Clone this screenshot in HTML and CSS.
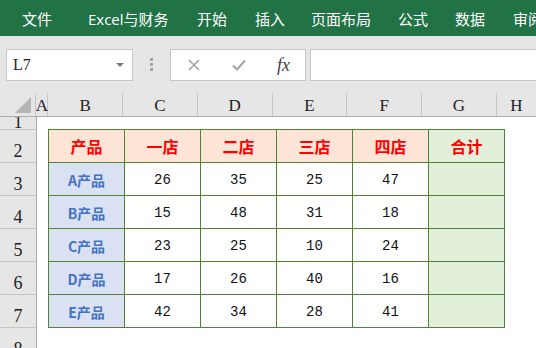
FILE: index.html
```html
<html>
<head>
    <link rel="stylesheet" href="styles.css">
    <title>Excel</title>
</head>
<body>
    <div class="ribbon">
        <span class="tab w66">文件</span>
        <span class="tab w109">Excel与财务</span>
        <span class="tab w58">开始</span>
        <span class="tab w56">插入</span>
        <span class="tab w87">页面布局</span>
        <span class="tab w57">公式</span>
        <span class="tab w58">数据</span>
        <span class="tab">审阅</span>
    </div>

    <div class="fbar">
        <div class="namebox">
            <span class="cellref">L7</span>
            <span class="drop"></span>
        </div>
        <div class="dots"><i></i><i></i><i></i></div>
        <div class="fxbox">
            <svg class="ico" width="14" height="14" viewBox="0 0 14 14">
                <path d="M2 2 L12 12 M12 2 L2 12" stroke="#a3a3a3" stroke-width="1.6" fill="none"/>
            </svg>
            <svg class="ico" width="16" height="14" viewBox="0 0 16 14">
                <path d="M2 7.5 L6 11.5 L14 2.5" stroke="#a3a3a3" stroke-width="2" fill="none"/>
            </svg>
            <span class="fx">fx</span>
        </div>
        <div class="input"></div>
    </div>

    <div class="colhead">
        <div class="corner"><span class="tri"></span></div>
        <div class="ch ca">A</div>
        <div class="ch">B</div>
        <div class="ch">C</div>
        <div class="ch">D</div>
        <div class="ch">E</div>
        <div class="ch">F</div>
        <div class="ch">G</div>
        <div class="ch last">H</div>
    </div>

    <div class="sheet">
        <div class="rowheads">
            <div class="rh r1">1</div>
            <div class="rh">2</div>
            <div class="rh">3</div>
            <div class="rh">4</div>
            <div class="rh">5</div>
            <div class="rh">6</div>
            <div class="rh">7</div>
            <div class="rh">8</div>
        </div>
        <div class="body">
            <div class="grid">
                <div class="c hd">产品</div>
                <div class="c hd">一店</div>
                <div class="c hd">二店</div>
                <div class="c hd">三店</div>
                <div class="c hd">四店</div>
                <div class="c hd tot">合计</div>

                <div class="c pr">A产品</div>
                <div class="c num">26</div>
                <div class="c num">35</div>
                <div class="c num">25</div>
                <div class="c num">47</div>
                <div class="c tot"></div>

                <div class="c pr">B产品</div>
                <div class="c num">15</div>
                <div class="c num">48</div>
                <div class="c num">31</div>
                <div class="c num">18</div>
                <div class="c tot"></div>

                <div class="c pr">C产品</div>
                <div class="c num">23</div>
                <div class="c num">25</div>
                <div class="c num">10</div>
                <div class="c num">24</div>
                <div class="c tot"></div>

                <div class="c pr">D产品</div>
                <div class="c num">17</div>
                <div class="c num">26</div>
                <div class="c num">40</div>
                <div class="c num">16</div>
                <div class="c tot"></div>

                <div class="c pr">E产品</div>
                <div class="c num">42</div>
                <div class="c num">34</div>
                <div class="c num">28</div>
                <div class="c num">41</div>
                <div class="c tot"></div>
            </div>
        </div>
    </div>
</body>
</html>
```

FILE: styles.css
```css
* {
    box-sizing: border-box;
}
body {
    margin: 0;
    width: 536px;
    height: 348px;
    overflow: hidden;
    background: #fff;
    font-family: "Noto Sans CJK SC", sans-serif;
}

/* ribbon tabs */
.ribbon {
    height: 36px;
    background: #217346;
    display: flex;
    align-items: center;
    padding-left: 22px;
    white-space: nowrap;
}
.tab {
    color: #fff;
    font-size: 15px;
    font-family: "Open Sans", "Noto Sans CJK SC", sans-serif;
    flex: none;
}
.w66 { width: 66px; }
.w109 { width: 109px; }
.w58 { width: 58px; }
.w56 { width: 56px; }
.w87 { width: 87px; }
.w57 { width: 57px; }

/* formula bar */
.fbar {
    height: 57px;
    background: #e6e6e6;
    display: flex;
    padding: 13px 0 0 6px;
}
.namebox {
    width: 127px;
    height: 32px;
    background: #fff;
    border: 1px solid #c6c6c6;
    display: flex;
    align-items: center;
    justify-content: space-between;
    padding: 0 8px 0 6px;
}
.cellref {
    font-family: "Liberation Serif", serif;
    font-size: 16px;
    color: #222;
}
.drop {
    width: 0;
    height: 0;
    border-left: 4px solid transparent;
    border-right: 4px solid transparent;
    border-top: 4px solid #777;
}
.dots {
    width: 37px;
    display: flex;
    flex-direction: column;
    align-items: center;
    padding-top: 9px;
    gap: 2px;
}
.dots i {
    width: 3px;
    height: 3px;
    background: #a6a6a6;
}
.fxbox {
    width: 136px;
    height: 32px;
    background: #fff;
    border: 1px solid #c6c6c6;
    display: flex;
    align-items: center;
    padding-left: 16px;
}
.ico {
    margin-right: 30px;
}
.fx {
    font-family: "Liberation Serif", serif;
    font-style: italic;
    font-size: 18px;
    color: #444;
}
.input {
    flex: 1;
    height: 32px;
    margin-left: 4px;
    background: #fff;
    border: 1px solid #c6c6c6;
    border-right: none;
}

/* column headers */
.colhead {
    height: 24px;
    background: #e6e6e6;
    display: flex;
    border-bottom: 1px solid #ababab;
}
.corner {
    width: 37px;
    border-right: 1px solid #c6c6c6;
    position: relative;
}
.tri {
    position: absolute;
    right: 4px;
    bottom: 3px;
    width: 0;
    height: 0;
    border-left: 16px solid transparent;
    border-bottom: 16px solid #b5b5b5;
}
.ch {
    width: 76px;
    border-right: 1px solid #c6c6c6;
    display: flex;
    align-items: center;
    justify-content: center;
    padding-top: 3px;
    font-family: "Liberation Serif", serif;
    font-size: 17px;
    color: #222;
}
.ch.ca {
    width: 12px;
}
.ch.last {
    border-right: none;
    width: 40px;
}

/* sheet */
.sheet {
    display: flex;
}
.rowheads {
    width: 37px;
    background: #e6e6e6;
    border-right: 1px solid #ababab;
}
.rh {
    height: 33px;
    border-bottom: 1px solid #c6c6c6;
    display: flex;
    align-items: flex-end;
    justify-content: center;
    padding-bottom: 1px;
    font-family: "Liberation Serif", serif;
    font-size: 18px;
    line-height: 20px;
    color: #222;
    overflow: hidden;
}
.rh.r1 {
    height: 13px;
    padding-bottom: 0;
    line-height: 14px;
}
.body {
    padding: 12px 0 0 11px;
}
.grid {
    display: grid;
    grid-template-columns: repeat(6, 75px);
    grid-template-rows: repeat(6, 32px);
    gap: 1px;
    padding: 1px;
    background: #538135;
}
.c {
    background: #fff;
    display: flex;
    align-items: center;
    justify-content: center;
}
.hd {
    background: #fce4d6;
    color: #ff0000;
    font-weight: 700;
    font-size: 16px;
}
.tot {
    background: #e2efda;
}
.pr {
    background: #d9e1f2;
    color: #4472c4;
    font-weight: 700;
    font-size: 14px;
    padding-top: 1px;
}
.num {
    font-family: "Liberation Mono", monospace;
    font-size: 14px;
    color: #111;
    padding-top: 2px;
}
```
